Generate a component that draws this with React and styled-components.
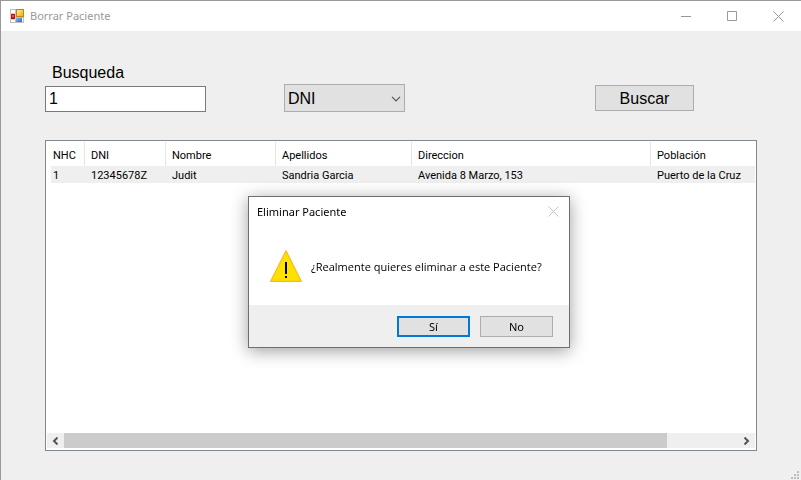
import React, { useState } from "react";
import styled, { createGlobalStyle } from "styled-components";

const uiFont = '"Noto Sans", "Open Sans", sans-serif';
const messageFont = '"Open Sans", "Noto Sans", sans-serif';
const formFont = '"Liberation Sans", Arial, sans-serif';
const listFont = 'Roboto, "Liberation Sans", sans-serif';

const GlobalStyle = createGlobalStyle`
  *, *::before, *::after { box-sizing: border-box; }
  body { margin: 0; background: #efefef; color: #000; font-family: ${formFont}; }
  button, input, select { font-family: inherit; color: inherit; margin: 0; }
`;

const Window = styled.div`
  position: relative;
  display: flex;
  flex-direction: column;
  min-height: 100vh;
  border-top: 1px solid #999;
  border-left: 1px solid #999;
  background: #efefef;
`;

const TitleBar = styled.header`
  display: flex;
  align-items: center;
  height: 30px;
  padding-left: 9px;
  background: #fff;
`;

const WindowTitle = styled.h1`
  flex: 1;
  margin: 0 0 0 6px;
  font: 400 11px/16px ${uiFont};
  color: #999;
`;

const CaptionButton = styled.button`
  display: grid;
  place-items: center;
  width: ${(p) => (p.$compact ? "31px" : "46px")};
  height: ${(p) => (p.$compact ? "29px" : "28px")};
  padding: 0;
  border: 0;
  background: transparent;
  color: ${(p) => (p.$compact ? "#c4c4c4" : "#999")};
`;

const Content = styled.main`
  flex: 1;
  display: flex;
  flex-direction: column;
  padding: 32px 44px 29px;
`;

const SearchBar = styled.form`
  display: flex;
  align-items: flex-end;
  margin-bottom: 28px;
`;

const SearchField = styled.div`
  display: flex;
  flex-direction: column;
  flex: 0 1 161px;
  min-width: 0;
`;

const FieldLabel = styled.label`
  padding-left: 7px;
  margin-bottom: 4px;
  font-size: 16px;
  line-height: 19px;
`;

const TextBox = styled.input`
  width: 100%;
  height: 26px;
  padding: 0 3px;
  border: 1px solid #7a7a7a;
  background: #fff;
  font-size: 16px;
`;

const SelectWrap = styled.div`
  position: relative;
  flex: 0 1 121px;
  margin-left: 78px;
`;

const Select = styled.select`
  display: block;
  appearance: none;
  width: 100%;
  height: 28px;
  padding: 0 18px 0 3px;
  border: 1px solid #adadad;
  border-radius: 0;
  background: #e1e1e1;
  font-size: 16px;
`;

const SelectArrow = styled.svg`
  position: absolute;
  top: 12px;
  right: 4px;
  pointer-events: none;
`;

const SearchButton = styled.button`
  width: 99px;
  height: 26px;
  margin: 0 63px 1px auto;
  padding: 2px 0 0;
  border: 1px solid #adadad;
  background: #e1e1e1;
  font-size: 16px;
`;

const ListPanel = styled.section`
  flex: 1;
  display: flex;
  flex-direction: column;
  padding: 1px 1px 2px;
  border: 1px solid #828790;
  background: #fff;
`;

const ListArea = styled.div`
  flex: 1;
  overflow: hidden;
  padding-left: 4px;
`;

const Table = styled.table`
  width: 100%;
  table-layout: fixed;
  border-collapse: separate;
  border-spacing: 0;
  font-family: ${listFont};
  font-size: 11px;
  line-height: 15px;
  text-align: left;
  white-space: nowrap;
`;

const Column = styled.col`
  width: ${(p) => p.$width || "auto"};
`;

const HeaderCell = styled.th`
  height: 24px;
  padding: 2px 0 0 6px;
  border-right: 1px solid #e5e5e5;
  font-weight: 400;

  &:first-child { padding-left: 2px; }
  &:last-child { border-right: 0; }
`;

const Cell = styled.td`
  height: 17px;
  padding: 2px 0 0 6px;
  background: #efefef;

  &:first-child { padding-left: 2px; }
`;

const ScrollBar = styled.div`
  display: flex;
  height: 15px;
  background: #efefef;
`;

const ScrollButton = styled.button`
  display: grid;
  place-items: center;
  width: 17px;
  padding: 0;
  border: 0;
  background: transparent;
`;

const ScrollTrack = styled.div`
  flex: 1;
`;

const ScrollThumb = styled.div`
  width: 89.5%;
  height: 100%;
  background: #cbcbcb;
`;

const SizeGrip = styled.svg`
  position: absolute;
  right: 2px;
  bottom: 1px;
`;

const Overlay = styled.div`
  position: fixed;
  inset: 0;
  display: grid;
  place-items: center;
  padding: 64px 0 0 17px;
`;

const Dialog = styled.div`
  width: 322px;
  border: 1px solid #6e6e6e;
  background: #fff;
  box-shadow: 0 3px 16px rgba(0, 0, 0, 0.38);
  font: 400 11px/16px ${uiFont};
`;

const DialogHeader = styled.header`
  display: flex;
  align-items: center;
  justify-content: space-between;
  padding-left: 8px;
`;

const DialogTitle = styled.h2`
  margin: 0;
  font: inherit;
`;

const DialogBody = styled.div`
  display: flex;
  align-items: center;
  gap: 9px;
  height: 79px;
  padding: 1px 0 0 21px;
`;

const DialogText = styled.p`
  margin: 0;
  padding-top: 2px;
  font-family: ${messageFont};
  white-space: nowrap;
`;

const DialogFooter = styled.footer`
  display: flex;
  justify-content: flex-end;
  gap: 10px;
  padding: 11px 16px 10px;
  background: #efefef;
`;

const DialogButton = styled.button`
  width: 73px;
  height: 21px;
  padding: 0;
  border: ${(p) => (p.$primary ? "2px solid #0078d7" : "1px solid #adadad")};
  background: #e1e1e1;
  font-size: 11px;
  line-height: 16px;
  outline: 0;
`;

const columns = [
  { name: "NHC", width: "34px" },
  { name: "DNI", width: "81px" },
  { name: "Nombre", width: "110px" },
  { name: "Apellidos", width: "136px" },
  { name: "Direccion", width: "239px" },
  { name: "Población" },
];

const patients = [
  ["1", "12345678Z", "Judit", "Sandria Garcia", "Avenida 8 Marzo, 153", "Puerto de la Cruz"],
];

function FormIcon() {
  return (
    <svg width="14" height="14" viewBox="0 0 14 14" aria-hidden="true">
      <defs>
        <linearGradient id="gold" x2="1" y2="1">
          <stop stopColor="#ffeaa0" />
          <stop offset="1" stopColor="#f3b000" />
        </linearGradient>
        <linearGradient id="blue" x2="1" y2="1">
          <stop stopColor="#88b8f8" />
          <stop offset="1" stopColor="#2566cc" />
        </linearGradient>
      </defs>
      <path d="M0 0h14v14H0z" fill="#bdbdbd" />
      <path d="M1 1h4v3H1zM1 11h4v2H1zM12 9h1v4h-1z" fill="#fff" />
      <path d="M0 4h6v7H0z" fill="#e4c4c4" />
      <path d="M1 5h4v5H1z" fill="#a81c1c" />
      <path d="M2 6h2v2H2z" fill="#e05a4a" />
      <path d="M6 0h8v8H6z" fill="#bd8517" />
      <path d="M7 1h6v6H7z" fill="url(#gold)" />
      <path d="M6 9h6v4H6z" fill="url(#blue)" />
    </svg>
  );
}

function CloseIcon() {
  return (
    <svg width="11" height="11" viewBox="0 0 11 11" aria-hidden="true">
      <path d="M.5.5l10 10M10.5.5l-10 10" stroke="currentColor" fill="none" />
    </svg>
  );
}

function WarningIcon() {
  return (
    <svg width="32" height="32" viewBox="0 0 32 32" aria-hidden="true">
      <path d="M16 .8L31.4 31.4H.6z" fill="#ffe100" stroke="#fdb913" strokeWidth="1.2" strokeLinejoin="round" />
      <path d="M15 12h2v12h-2zM15 26h2v2h-2z" fill="#000" />
    </svg>
  );
}

export default function App() {
  const [query, setQuery] = useState("1");
  const [open, setOpen] = useState(true);
  const close = () => setOpen(false);

  return (
    <Window>
      <GlobalStyle />
      <TitleBar>
        <FormIcon />
        <WindowTitle>Borrar Paciente</WindowTitle>
        <CaptionButton aria-label="Minimizar">
          <svg width="10" height="10" aria-hidden="true">
            <path d="M0 5.5h10" stroke="currentColor" />
          </svg>
        </CaptionButton>
        <CaptionButton aria-label="Maximizar">
          <svg width="10" height="10" aria-hidden="true">
            <path d="M.5.5h9v9h-9z" stroke="currentColor" fill="none" />
          </svg>
        </CaptionButton>
        <CaptionButton aria-label="Cerrar">
          <CloseIcon />
        </CaptionButton>
      </TitleBar>

      <Content>
        <SearchBar onSubmit={(e) => e.preventDefault()}>
          <SearchField>
            <FieldLabel htmlFor="query">Busqueda</FieldLabel>
            <TextBox id="query" value={query} onChange={(e) => setQuery(e.target.value)} />
          </SearchField>
          <SelectWrap>
            <Select aria-label="Campo de busqueda" defaultValue="DNI">
              <option>DNI</option>
              <option>NHC</option>
            </Select>
            <SelectArrow width="10" height="6" viewBox="0 0 10 6" aria-hidden="true">
              <path d="M1 .8l4 4 4-4" stroke="#555" strokeWidth="1.2" fill="none" />
            </SelectArrow>
          </SelectWrap>
          <SearchButton type="submit">Buscar</SearchButton>
        </SearchBar>

        <ListPanel>
          <ListArea>
            <Table>
              <colgroup>
                {columns.map((c) => (
                  <Column key={c.name} $width={c.width} />
                ))}
              </colgroup>
              <thead>
                <tr>
                  {columns.map((c) => (
                    <HeaderCell key={c.name} scope="col">{c.name}</HeaderCell>
                  ))}
                </tr>
              </thead>
              <tbody>
                {patients.map((row) => (
                  <tr key={row[0]}>
                    {row.map((value, i) => (
                      <Cell key={columns[i].name}>{value}</Cell>
                    ))}
                  </tr>
                ))}
              </tbody>
            </Table>
          </ListArea>
          <ScrollBar>
            <ScrollButton aria-label="Desplazar a la izquierda">
              <svg width="7" height="8" viewBox="0 0 7 8" aria-hidden="true">
                <path d="M5.5.5L2 4l3.5 3.5" stroke="#555" strokeWidth="2" fill="none" />
              </svg>
            </ScrollButton>
            <ScrollTrack>
              <ScrollThumb />
            </ScrollTrack>
            <ScrollButton aria-label="Desplazar a la derecha">
              <svg width="7" height="8" viewBox="0 0 7 8" aria-hidden="true">
                <path d="M1.5.5L5 4 1.5 7.5" stroke="#555" strokeWidth="2" fill="none" />
              </svg>
            </ScrollButton>
          </ScrollBar>
        </ListPanel>
      </Content>

      <SizeGrip width="8" height="8" viewBox="0 0 8 8" aria-hidden="true">
        <path d="M6 0h2v2H6zM3 3h2v2H3zM6 3h2v2H6zM0 6h2v2H0zM3 6h2v2H3zM6 6h2v2H6z" fill="#bfbfbf" />
      </SizeGrip>

      {open && (
        <Overlay>
          <Dialog role="alertdialog" aria-labelledby="dialog-title" aria-describedby="dialog-text">
            <DialogHeader>
              <DialogTitle id="dialog-title">Eliminar Paciente</DialogTitle>
              <CaptionButton $compact aria-label="Cerrar" onClick={close}>
                <CloseIcon />
              </CaptionButton>
            </DialogHeader>
            <DialogBody>
              <WarningIcon />
              <DialogText id="dialog-text">¿Realmente quieres eliminar a este Paciente?</DialogText>
            </DialogBody>
            <DialogFooter>
              <DialogButton $primary onClick={close}>Sí</DialogButton>
              <DialogButton onClick={close}>No</DialogButton>
            </DialogFooter>
          </Dialog>
        </Overlay>
      )}
    </Window>
  );
}
